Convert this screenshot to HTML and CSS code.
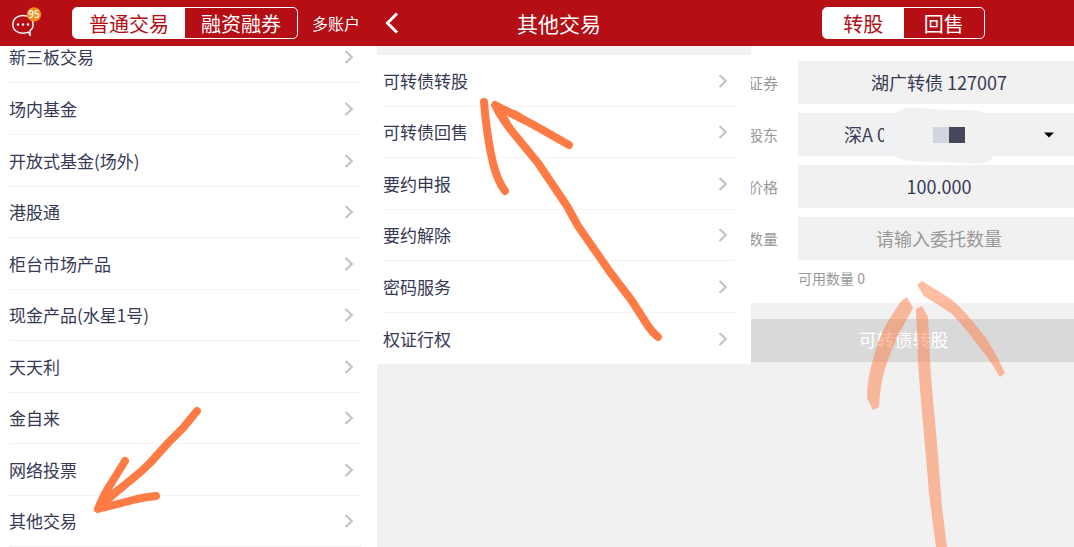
FILE: index.html
```
<!DOCTYPE html>
<html lang="zh-CN">
	<head>
		<meta charset="utf-8">
		<title>可转债转股</title>
		<link rel="stylesheet" href="styles.css">
	</head>

	<body>
		<svg class="defs" aria-hidden="true">
			<symbol id="chevron" viewBox="0 0 10 14">
				<path d="M1.500 1 7.800 7 1.500 13" fill="none" stroke="#c4c4c8" stroke-width="2.200" />
			</symbol>
		</svg>

		<div class="screens">
			<!-- trade menu -->
			<section class="screen menu">
				<header class="bar">
					<button class="messages" aria-label="消息">
						<svg width="30" height="32" viewBox="0 0 30 32">
							<path d="M11 8.500C5 8.500.8 12.200.8 17.500S5 26.200 11 26.200c2.300 0 4-.4 5.300-1l1.800 3.300-.2-4.700c2.200-1.500 3.200-3.600 3.200-6.300C21.100 12.200 17 8.500 11 8.500Z" fill="none" stroke="#fff" stroke-width="1.400" stroke-linejoin="round" />
							<circle cx="6" cy="17.500" r="1.200" fill="#fff" />
							<circle cx="11" cy="17.500" r="1.200" fill="#fff" />
							<circle cx="16" cy="17.500" r="1.200" fill="#fff" />
							<circle cx="22" cy="7.500" r="7.200" fill="#f68a12" />
							<text x="22" y="11" text-anchor="middle" class="count">95</text>
						</svg>
					</button>
					<div class="tabs">
						<button class="tab active">普通交易</button>
						<button class="tab">融资融券</button>
					</div>
					<a class="accounts" href="#">多账户</a>
				</header>
				<nav class="list scrolled">
					<a href="#">新三板交易<svg><use href="#chevron" /></svg></a>
					<a href="#">场内基金<svg><use href="#chevron" /></svg></a>
					<a href="#">开放式基金(场外)<svg><use href="#chevron" /></svg></a>
					<a href="#">港股通<svg><use href="#chevron" /></svg></a>
					<a href="#">柜台市场产品<svg><use href="#chevron" /></svg></a>
					<a href="#">现金产品(水星1号)<svg><use href="#chevron" /></svg></a>
					<a href="#">天天利<svg><use href="#chevron" /></svg></a>
					<a href="#">金自来<svg><use href="#chevron" /></svg></a>
					<a href="#">网络投票<svg><use href="#chevron" /></svg></a>
					<a href="#">其他交易<svg><use href="#chevron" /></svg></a>
				</nav>
				<svg class="arrow arrow-menu" width="120" height="120" viewBox="90 400 120 120">
					<path d="M197 411 183 428Q176 435 168 443L150 463Q141 472 132 479L104 502M125 461 112 482Q104 494 98 509L137 499Q146 497 156 496" />
					<path class="wedge" d="M108 493 130 476 134 482 107 505Z" />
				</svg>
			</section>

			<!-- other trades -->
			<section class="screen other">
				<header class="bar">
					<button class="back" aria-label="返回">
						<svg width="14" height="22" viewBox="0 0 14 22">
							<path d="M12 1.500 2.500 11 12 20.500" fill="none" stroke="#fff" stroke-width="3" />
						</svg>
					</button>
					<h1>其他交易</h1>
				</header>
				<nav class="list">
					<a href="#">可转债转股<svg><use href="#chevron" /></svg></a>
					<a href="#">可转债回售<svg><use href="#chevron" /></svg></a>
					<a href="#">要约申报<svg><use href="#chevron" /></svg></a>
					<a href="#">要约解除<svg><use href="#chevron" /></svg></a>
					<a href="#">密码服务<svg><use href="#chevron" /></svg></a>
					<a href="#">权证行权<svg><use href="#chevron" /></svg></a>
				</nav>
				<svg class="arrow arrow-other" width="200" height="260" viewBox="470 90 200 260">
					<path d="M484 102C486 127 489 146 493 163C496 176 500 184 505 191M569 145 532 124Q514 115 495 105Q502 119 511 130L538 163 567 206 578 226 610 272 632 301 648 326Q652 332 658 337" />
					<path class="wedge" d="M494 103 517 111 530 119 528 125 506 114 516 132 508 132Z" />
				</svg>
			</section>

			<!-- bond conversion order -->
			<section class="screen order">
				<header class="bar">
					<div class="tabs">
						<button class="tab active">转股</button>
						<button class="tab">回售</button>
					</div>
				</header>
				<form>
					<div class="fields">
						<div class="field">
							<label for="bond">证券</label>
							<input id="bond" type="text" value="湖广转债 127007">
						</div>
						<div class="field">
							<label for="holder">股东</label>
							<select id="holder">
								<option>深A 0</option>
							</select>
							<svg class="caret" width="10" height="6" viewBox="0 0 10 6"><path d="M0 .5h10L5 5.500Z" /></svg>
							<svg class="mask" width="116" height="58" viewBox="882 107 116 58">
								<path d="M886 122 895 114C903 107 911 107 920 108C941 111 965 108 983 112C991 115 997 121 997 135C997 147 996 157 989 161C979 166 964 163 943 162C925 162 904 162 896 157L886 151Z" fill="#f1f1f1" />
								<path d="M884 122h16v28h-16Z" fill="#f0f1f5" />
								<path d="M933 127h16v16h-16Z" fill="#d3d6e1" />
								<path d="M949 127h16v16h-16Z" fill="#45485b" />
							</svg>
						</div>
						<div class="field">
							<label for="price">价格</label>
							<input id="price" type="text" value="100.000">
						</div>
						<div class="field">
							<label for="amount">数量</label>
							<input id="amount" type="text" placeholder="请输入委托数量">
						</div>
						<p class="hint">可用数量 0</p>
					</div>
					<button class="submit" type="submit" disabled>可转债转股</button>
				</form>
				<svg class="arrow-order" width="150" height="267" viewBox="860 280 150 267">
					<path d="M907 297 913 308 901 330Q892 347 887 363Q880 382 879 407L873 410 867 398Q867 378 873 360Q878 340 887 323L901 301Z" />
					<path d="M922 306 928 317 930 360Q931 380 937 443L942 507 947 547H936Q931 510 929 493L923 423Q919 380 918 360L916 309Z" />
					<path d="M922 281 951 299Q966 312 977 327L986 338Q997 355 1005 373L1000 377Q988 357 974 340 963 325 951 313L924 296 917 285Z" />
				</svg>
			</section>
		</div>
	</body>
</html>
```
FILE: styles.css
```
* {
	box-sizing: border-box;
}

body {
	margin: 0;
	background-color: #f1f1f1;
	color: #363a55;
	font-family: "Noto Sans CJK SC", sans-serif;
	font-size: 17px;
	line-height: 24px;
}

button, input, select {
	margin: 0;
	padding: 0;
	border: 0;
	border-radius: 0;
	background: none;
	color: inherit;
	font: inherit;
}

a {
	color: inherit;
	text-decoration: none;
}

.defs {
	position: absolute;
	width: 0;
	height: 0;
}

.screens {
	display: grid;
	grid-template-columns: 377fr 374fr 323fr;
	min-height: 100vh;
}

.screen {
	position: relative;
	min-width: 0;
	overflow: hidden;
}

.menu {
	background-color: #fff;
}

/* top bars */
.bar {
	position: relative;
	z-index: 1;
	display: flex;
	align-items: center;
	height: 46px;
	background-color: #b50e15;
	color: #fff;
}

.menu .bar {
	padding: 0 17px 0 12px;
}

.other .bar {
	padding-right: 50px;
}

.order .bar {
	justify-content: center;
	padding-right: 18px;
}

.messages {
	width: 60px;
	height: 40px;
	text-align: left;
}

.messages svg,
.back svg {
	display: block;
}

.count {
	fill: #fff;
	font-family: "Open Sans", sans-serif;
	font-size: 10px;
	font-weight: 600;
}

.tabs {
	display: flex;
	height: 32px;
	border: 1px solid #fff;
	border-radius: 5px;
	overflow: hidden;
}

.menu .tabs {
	flex: 1;
}

.order .tabs {
	width: 163px;
}

.tab {
	flex: 1;
	padding-top: 2px;
	font-size: 20px;
	line-height: 28px;
}

.tab.active {
	background-color: #fff;
	color: #b50e15;
}

.accounts {
	margin-left: 14px;
	font-size: 16px;
}

.back {
	width: 40px;
	padding-left: 8px;
}

h1 {
	flex: 1;
	margin: 0;
	font-size: 21px;
	font-weight: 400;
	text-align: center;
}

/* menu lists */
.list {
	padding: 0 16px 0 9px;
	background-color: #fff;
}

.scrolled {
	margin-top: -15px;
}

.other .list {
	margin-top: 9px;
	padding-left: 6px;
}

.list a {
	display: flex;
	align-items: center;
	justify-content: space-between;
	height: 52px;
	padding-right: 7px;
	border-bottom: 1px solid #f3f3f3;
}

.list a:nth-child(even) {
	height: 51px;
}

.scrolled a:nth-child(2) {
	height: 52px;
}

.other .list a:last-child {
	border-bottom: 0;
}

.list svg {
	width: 10px;
	height: 14px;
}

/* order form */
.fields {
	display: grid;
	gap: 9px;
	padding: 15px 0;
	background-color: #fff;
}

.field {
	position: relative;
	display: flex;
	align-items: center;
	height: 43px;
}

.field label {
	display: flex;
	justify-content: flex-end;
	width: 27px;
	margin-right: 20px;
	color: #999;
	font-size: 15px;
	white-space: nowrap;
}

.field input,
.field select {
	flex: 1;
	min-width: 0;
	height: 43px;
	padding: 0 0 2px 6px;
	background-color: #f1f1f1;
	font-size: 18px;
	text-align: center;
}

.field select {
	appearance: none;
	padding-left: 46px;
	text-align: left;
}

.field input::placeholder {
	color: #999;
	opacity: 1;
}

.caret {
	position: absolute;
	right: 20px;
}

.mask {
	position: absolute;
	top: -6px;
	left: 131px;
	z-index: 1;
	pointer-events: none;
}

.hint {
	margin: 0 0 0 47px;
	color: #999;
	font-size: 14px;
	line-height: 19px;
}

.submit {
	display: block;
	width: 100%;
	height: 43px;
	margin-top: 16px;
	padding: 0 18px 4px 0;
	background-color: #d9d9d9;
	color: #fff;
	font-size: 18px;
}

/* hand-drawn arrows */
.arrow,
.arrow-order {
	position: absolute;
	z-index: 2;
	pointer-events: none;
}

.arrow {
	fill: none;
	stroke: #ff7b45;
	stroke-width: 8px;
	stroke-linecap: round;
	stroke-linejoin: round;
}

.arrow .wedge {
	fill: #ff7b45;
	stroke: none;
}

.arrow-menu {
	top: 400px;
	left: 90px;
}

.arrow-other {
	top: 90px;
	left: 93px;
}

.arrow-order {
	top: 280px;
	left: 109px;
	fill: #ff7b45;
	fill-opacity: .5;
}
```
